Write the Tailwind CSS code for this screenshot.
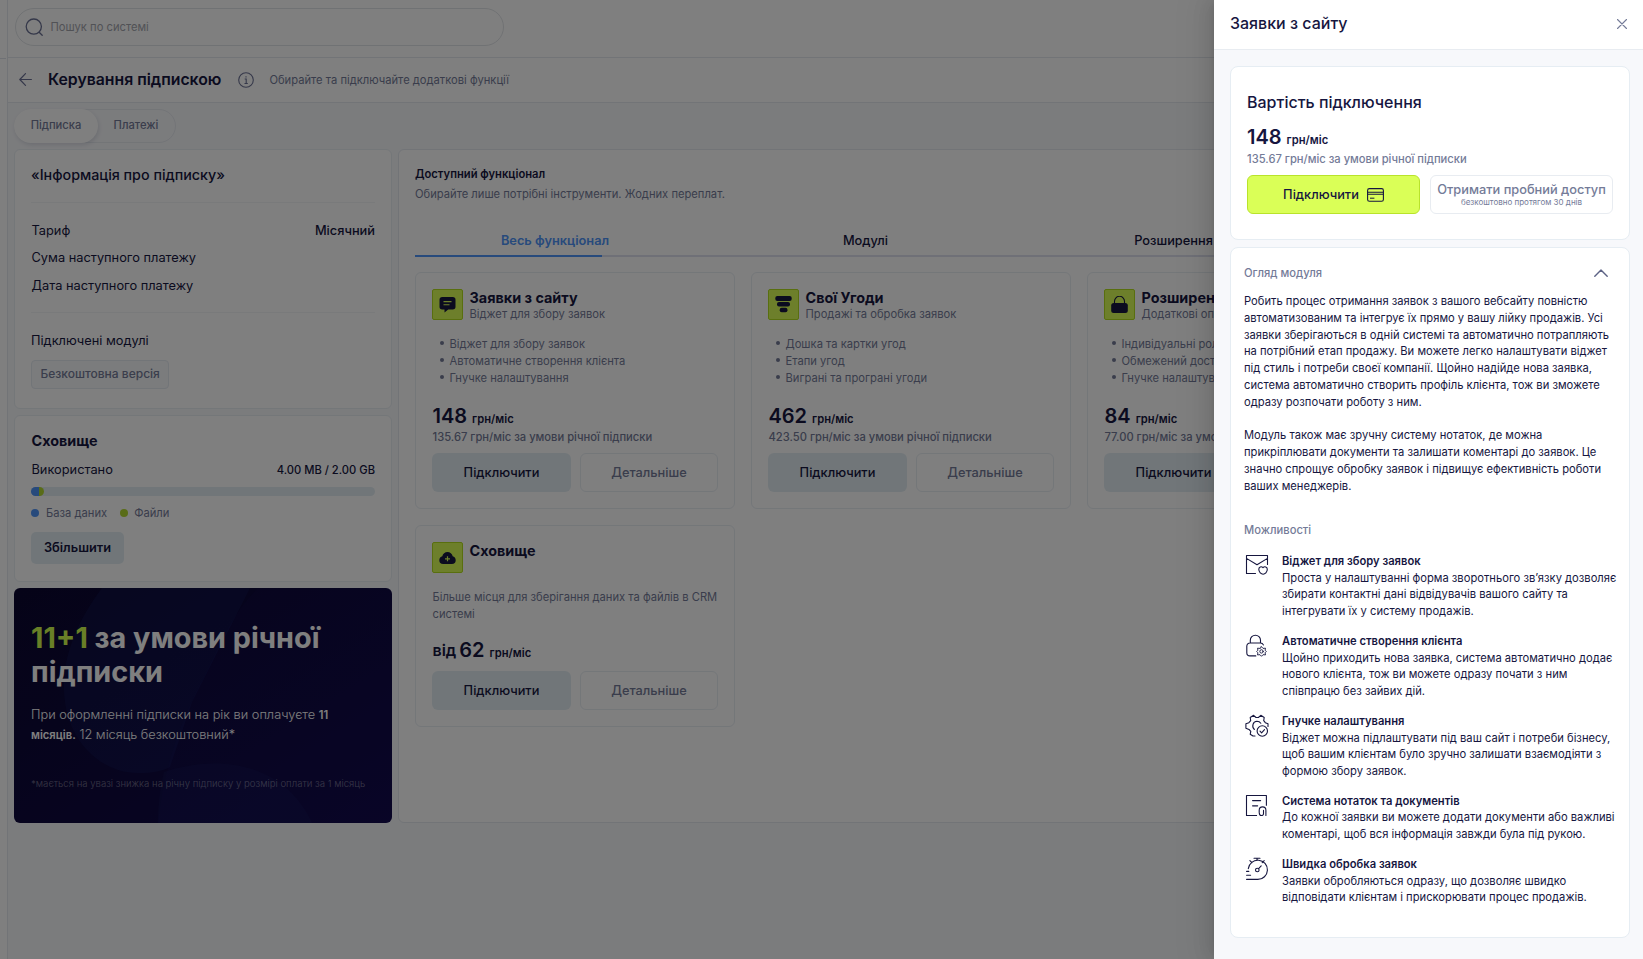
<!DOCTYPE html>
<html lang="uk">
<head>
  <meta charset="utf-8"/>
  <meta content="width=device-width, initial-scale=1" name="viewport"/>
  <title>Керування підпискою</title>
  <script src="https://cdn.jsdelivr.net/npm/@tailwindcss/browser@4"></script>
</head>
<body class="relative h-[959px] overflow-hidden bg-white font-[Inter,sans-serif] text-[11.2px] leading-[16.8px] text-[#16163f]">

  <!-- Сторінка -->
  <div class="flex h-full">
    <aside class="w-[7px] shrink-0">
      <div class="mt-[58px] w-[6px] border-t border-[#dfe3ea]"></div>
    </aside>

    <div class="flex min-w-0 flex-1 flex-col border-l border-[#e4e9ef] bg-[#f7f8fb]">
      <header class="h-[58px] shrink-0 border-b border-[#e4e9ef] bg-white pl-[7px] pt-2">
        <div class="flex h-[38px] w-[489px] items-center rounded-full border border-[#e1e4e8] pl-[9px]">
          <svg class="size-[18px]" viewBox="0 0 18 18" fill="none" stroke="#6b7194" stroke-width="1.3"><circle cx="8.8" cy="8.6" r="7.6"/><path d="M14.2 14.2l3 3" stroke-linecap="round"/></svg>
          <span class="ml-[7.5px] pt-px text-[#a3a5ad]">Пошук по системі</span>
        </div>
      </header>

      <div class="flex h-[45px] shrink-0 items-center border-b border-[#e4e9ef] bg-white pl-[11px]">
        <svg class="-mt-px size-[13px]" viewBox="0 0 13 13" fill="none" stroke="#6b7194" stroke-width="1.2" stroke-linecap="round" stroke-linejoin="round"><path d="M12.4 6.5H.8M6.5.6L.8 6.5l5.7 5.9"/></svg>
        <h1 class="ml-4 text-[15.8px] font-semibold">Керування підпискою</h1>
        <svg class="ml-[17px] -mt-px size-4" viewBox="0 0 16 16" fill="none" stroke="#6b7194" stroke-width="1.1"><circle cx="8" cy="8" r="7.3"/><path d="M6.7 7h1.5v4.4M6.5 11.5h3.3M8 4.2v1.2"/></svg>
        <span class="ml-[15px] mt-px text-[#747b98]">Обирайте та підключайте додаткові функції</span>
      </div>

      <div class="pl-[6px] pt-[6px]">
        <div class="flex h-[34px] w-[162px] rounded-full border border-[#e6eaef] text-[#747b98]">
          <div class="-my-px -ml-px flex w-[84px] items-center justify-center rounded-full bg-white pb-px font-medium shadow-[1px_2px_4px_rgba(30,40,80,0.13)]">Підписка</div>
          <div class="flex flex-1 items-center justify-center pb-px pr-px font-medium">Платежі</div>
        </div>

        <div class="mt-[6px] flex gap-[6px]">
          <!-- Ліва колонка -->
          <div class="flex w-[378px] shrink-0 flex-col gap-[6px]">
            <section class="h-[260px] rounded-md border border-[#e8eef3] bg-white px-4 text-[12.8px]">
              <h2 class="h-[53px] border-b border-[#f2f4f6] pt-[17px] text-[14.3px] font-medium">«Інформація про підписку»</h2>
              <div class="h-[110px] border-b border-[#f2f4f6] pt-5">
                <div class="flex h-[27px] justify-between"><span class="pl-[.5px]">Тариф</span><span class="font-medium">Місячний</span></div>
                <div class="h-7 pl-[.5px]">Сума наступного платежу</div>
                <div class="pl-[.5px]">Дата наступного платежу</div>
              </div>
              <div class="pt-5">Підключені модулі</div>
              <span class="mt-[10px] inline-flex h-[29px] items-center rounded border border-[#e4eaf1] bg-[#f7f8fb] px-[8.5px] pt-px text-[12px] font-medium text-[#747b98]">Безкоштовна версія</span>
            </section>

            <section class="h-[167px] rounded-md border border-[#e8eef3] bg-white px-4 pt-[17px]">
              <h2 class="pl-[.5px] text-[14.4px] font-bold">Сховище</h2>
              <div class="mt-3 flex justify-between"><span class="pl-[.5px] text-[12.8px]">Використано</span><span class="font-medium">4.00 MB / 2.00 GB</span></div>
              <div class="mt-2 flex h-[9px] overflow-hidden rounded-full bg-[#e3edf3]">
                <div class="w-2 bg-[#4f94f8]"></div>
                <div class="w-[5px] rounded-r-full bg-[#b3d930]"></div>
              </div>
              <div class="mt-[9px] flex items-center text-[#747b98]">
                <i class="mr-[7px] size-2 rounded-full bg-[#4f94f8]"></i>База даних
                <i class="ml-[13px] mr-[6px] size-2 rounded-full bg-[#b3d930]"></i>Файли
              </div>
              <button class="mt-[11px] h-8 w-[93px] rounded-[5px] bg-[#e3edf3] pt-px text-[12.8px] font-semibold">Збільшити</button>
            </section>

            <section class="relative h-[235px] overflow-hidden rounded-md bg-linear-to-br from-[#0b0730] to-[#110a4a] px-[17px] pt-[33px] text-white">
              <svg class="absolute left-0 top-0" width="378" height="235" viewBox="0 0 378 235">
                <path d="M88 0C60 38 44 78 52 120c8 40 40 66 74 65 12 0 22-2 30-6l22-65L236 0z" fill="#1d3a86" fill-opacity=".16"/>
                <path d="M144 235c6-60 26-110 48-150 14-30 28-62 52-85h134v235z" fill="#1d24a0" fill-opacity=".06"/>
                <path d="M150 184c60-20 122-6 148 51H144c0-18 2-34 6-51z" fill="#1d3a86" fill-opacity=".12"/>
              </svg>
              <h2 class="relative text-[28.8px] font-bold leading-[34.4px]"><span class="text-[#d2ff4e]">11+1</span> за умови річної підписки</h2>
              <p class="relative mt-[15px] text-[12.8px] font-light leading-5">При оформленні підписки на рік ви оплачуєте <b class="text-[11.2px] font-semibold">11 місяців.</b> 12 місяць безкоштовний*</p>
              <p class="relative mt-[31px] whitespace-nowrap text-[9.6px] font-light text-white/40">*мається на увазі знижка на річну підписку у розмірі оплати за 1 місяць</p>
            </section>
          </div>

          <!-- Доступний функціонал -->
          <section class="h-[674px] flex-1 rounded-md border border-[#e4e9ef] bg-white px-4 pt-4">
            <h2 class="font-semibold">Доступний функціонал</h2>
            <p class="mt-[3.5px] text-[#747b98]">Обирайте лише потрібні інструменти. Жодних переплат.</p>
            <div class="-mx-4 mt-[29.5px] grid w-[1238px] grid-cols-[312px_309px_307px_310px] pb-[6px] text-center text-[12.8px] font-medium">
              <span class="font-semibold text-[#4f94f8]">Весь функціонал</span>
              <span>Модулі</span>
              <span>Розширення</span>
              <span>Послуги</span>
            </div>
            <div class="h-[2px] bg-[#dfe0ee]"><div class="h-full w-[187px] bg-[#4f94f8]"></div></div>
            <div id="modules" class="mt-[15px] grid w-[1000px] grid-cols-[repeat(3,320px)] items-start gap-4"></div>
          </section>
        </div>
      </div>
    </div>
  </div>

  <!-- Затемнення -->
  <div class="absolute inset-0 bg-black/50"></div>

  <!-- Бічна панель -->
  <aside class="absolute inset-y-0 right-0 w-[429px] bg-[#f7f8fb] shadow-[-6px_0_16px_0_rgba(0,0,0,0.08),-3px_0_6px_-4px_rgba(0,0,0,0.12),-9px_0_28px_8px_rgba(0,0,0,0.05)]">
    <header class="flex h-[50px] items-center justify-between border-b border-[#e8ecf1] bg-white pl-4 pr-4">
      <h2 class="-mt-0.5 text-[16px] font-medium">Заявки з сайту</h2>
      <svg class="-mt-0.5 size-[10px]" viewBox="0 0 10 10" stroke="#747b98" stroke-width="1.1" stroke-linecap="round"><path d="M.5.5l9 9M9.5.5l-9 9"/></svg>
    </header>

    <div class="flex flex-col gap-[7px] pl-4 pr-[13px] pt-4">
      <section class="h-[174px] rounded-lg border border-[#e6edf3] bg-white px-4 pt-[27px]">
        <h3 class="text-[16px] font-medium">Вартість підключення</h3>
        <div class="mt-[18px] flex items-baseline"><span class="text-[20px] font-semibold">148</span><span class="ml-[5px] font-semibold">грн/міс</span></div>
        <p class="mt-[2px] font-medium text-[#747b98]">135.67 грн/міс за умови річної підписки</p>
        <div class="mt-2 flex gap-[10px]">
          <button class="flex h-[39px] w-[173px] items-center justify-center rounded-md border border-[#b9e32b] bg-[#daff57] text-[12.8px] font-medium"><span class="pt-0.5">Підключити</span>
            <svg class="ml-2 h-[14px] w-[17px]" viewBox="0 0 17 14" fill="none" stroke="#16163f"><rect x=".6" y=".6" width="15.8" height="12.6" rx="1.8" stroke-width="1.1"/><path d="M.6 4.3h15.8M.6 6.3h15.8" stroke-width="1.1"/><path d="M3 10.2h4.4" stroke-width="1"/></svg>
          </button>
          <button class="flex h-[39px] w-[183px] flex-col items-center justify-center rounded-md border border-[#e8ecf1] font-medium text-[#747b98]">
            <span class="whitespace-nowrap text-[12.8px] leading-[15px]">Отримати пробний доступ</span>
            <span class="text-[8px] font-normal leading-[11px]">безкоштовно протягом 30 днів</span>
          </button>
        </div>
      </section>

      <section class="h-[691px] rounded-lg border border-[#e6edf3] bg-white px-[13px] pt-[17px]">
        <div class="flex items-center justify-between pr-2 font-medium text-[#747b98]">
          Огляд модуля
          <svg class="h-2 w-[14px]" viewBox="0 0 14 8" fill="none" stroke="#5c6285" stroke-width="1.4" stroke-linecap="round" stroke-linejoin="round"><path d="M.8 7.2L7 .9l6.2 6.3"/></svg>
        </div>
        <p class="mt-[11.2px] w-[369px]">Робить процес отримання заявок з вашого вебсайту повністю автоматизованим та інтегрує їх прямо у вашу лійку продажів. Усі заявки зберігаються в одній системі та автоматично потрапляють на потрібний етап продажу. Ви можете легко налаштувати віджет під стиль і потреби своєї компанії. Щойно надійде нова заявка, система автоматично створить профіль клієнта, тож ви зможете одразу розпочати роботу з ним.<br><br>Модуль також має зручну систему нотаток, де можна прикріплювати документи та залишати коментарі до заявок. Це значно спрощує обробку заявок і підвищує ефективність роботи ваших менеджерів.</p>
        <h4 class="mb-[14px] mt-[27.4px] font-medium text-[#747b98]">Можливості</h4>
        <div id="features" class="-mr-2 flex flex-col gap-[12.8px]"></div>
      </section>
    </div>
  </aside>

<script>
  const modules = [
    {
      title: 'Заявки з сайту', sub: 'Віджет для збору заявок',
      list: ['Віджет для збору заявок', 'Автоматичне створення клієнта', 'Гнучке налаштування'],
      price: '148', year: '135.67',
      icon: '<path d="M3.2 1h10.6A2.7 2.7 0 0 1 16.5 3.7v7A2.7 2.7 0 0 1 13.8 13.4H9.2L5.5 16.4V13.4H3.2A2.7 2.7 0 0 1 .5 10.7v-7A2.7 2.7 0 0 1 3.2 1z" fill="#16163f"/><path d="M4.5 5.6h8M4.5 8.8h6" stroke="#daff57" stroke-width="1.1"/>'
    },
    {
      title: 'Свої Угоди', sub: 'Продажі та обробка заявок',
      list: ['Дошка та картки угод', 'Етапи угод', 'Виграні та програні угоди'],
      price: '462', year: '423.50',
      icon: '<g fill="#16163f"><rect x=".3" y="0" width="16.4" height="5" rx="2"/><rect x="2" y="6" width="13" height="4.6" rx="2"/><rect x="4.7" y="11.7" width="7.8" height="4.5" rx="2"/></g>'
    },
    {
      title: 'Розширені права', sub: 'Додаткові опції доступу',
      list: ['Індивідуальні ролі', 'Обмежений доступ', 'Гнучке налаштування'],
      price: '84', year: '77.00',
      icon: '<path d="M3.5 8V5.3a5 5 0 0 1 10 0V8" fill="none" stroke="#16163f" stroke-width="1.1"/><rect x=".2" y="7" width="16.6" height="10" rx="2.5" fill="#16163f"/>'
    },
    {
      title: 'Сховище', text: 'Більше місця для зберігання даних та файлів в CRM системі', price: '62',
      icon: '<path d="M4.3 15A3.9 3.9 0 0 1 .3 11.2c0-2 1.4-3.5 3-3.9C3.8 4.8 6 3 8.5 3s4.7 1.8 5.2 4.3c1.600.4 3 1.9 3 3.9A3.9 3.9 0 0 1 12.7 15z" fill="#16163f"/><path d="M8.5 7.3v5M6 9.8h5" stroke="#daff57" stroke-width="1.2"/>'
    }
  ];

  const ink = 'fill="none" stroke="#16163f" stroke-width="1.1" stroke-linejoin="round" stroke-linecap="round"';
  const features = [
    {
      title: 'Віджет для збору заявок',
      text: 'Проста у налаштуванні форма зворотнього зв’язку дозволяє збирати контактні дані відвідувачів вашого сайту та інтегрувати їх у систему продажів.',
      icon: '<path d="M10.5 19.5H1.5V1.5h21v9M1.5 4.4l10.5 6.3L22.5 4.4"/><path d="M18 13.6c-1.7-1.7-4.2-.6-4.2 1.7 0 3 2.4 4.9 4.3 4.9s4.2-1.9 4.2-4.9c0-2.3-2.6-3.4-4.3-1.7z"/>'
    },
    {
      title: 'Автоматичне створення клієнта',
      text: 'Щойно приходить нова заявка, система автоматично додає нового клієнта, тож ви можете одразу почати з ним співпрацю без зайвих дій.',
      icon: '<path d="M5.3 8.8V6.3a5 5 0 0 1 10.2 0v2.5M10.8 21.9H5A3.2 3.2 0 0 1 1.8 18.7v-6.5A3.2 3.2 0 0 1 5 9h10.5a3.2 3.2 0 0 1 2.9 1.9"/><g stroke-width=".9"><circle cx="16.5" cy="17.4" r="1.7"/><path d="M16.5 12.7l1.5 1.7 2.5-.2-.4 2 1.2 1.3-1.2 1.3.4 2.1-2.5-.2-1.5 1.6-1.5-1.6-2.5.2.4-2.1-1.2-1.3 1.2-1.3-.4-2 2.5.2z"/></g>'
    },
    {
      title: 'Гнучке налаштування',
      text: 'Віджет можна підлаштувати під ваш сайт і потреби бізнесу, щоб вашим клієнтам було зручно залишати взаємодіяти з формою збору заявок.',
      icon: '<path d="M10 22H8L5.2 20.3 5.8 17.4 4 15.4.9 14.2V9.8L3.9 8.7 5.7 6.6 5.2 3.5 8.6 1.3 11 3.5h2.4L15.8 1.3 19.2 3.5 18.7 6.6 20.3 8.7 23 9.8V12.5"/><path d="M9.4 15.5C6.5 13 7.6 7.5 12 7.3c1.8 0 3 .7 3.8 1.9"/><circle cx="17.3" cy="17" r="5.2"/><path d="M15 17.2l1.6 1.6 2.9-3.2"/>'
    },
    {
      title: 'Система нотаток та документів',
      text: 'До кожної заявки ви можете додати документи або важливі коментарі, щоб вся інформація завжди була під рукою.',
      icon: '<path d="M11.5 21.5H1.5V1.5H21.4v9.7" stroke-linecap="square"/><path d="M7.6 6.6h8M7.6 11.8h5" stroke-width="1.2"/><path d="M14.2 18.5v-2.3a3.3 3.3 0 0 1 6.7 0v5.3M14.3 19c0 3.4 4.2 3.3 4.2.4v-3"/>'
    },
    {
      title: 'Швидка обробка заявок',
      text: 'Заявки обробляються одразу, що дозволяє швидко відповідати клієнтам і прискорювати процес продажів.',
      icon: '<path d="M1.6 22.4h11.2A9.6 9.6 0 1 0 3.3 11.6M1.6 18.2h4M1.6 14.4h2.2M9 1.3h6M12 1.3v2.2M4.9 3.7l2 2M19.2 3.7l-2 2"/><circle cx="12.3" cy="13" r="1.8"/><path d="M13.6 11.7l2.6-2.8"/>'
    }
  ];

  function moduleCard(m) {
    const body = m.list
      ? `<ul class="mt-4 h-[64px] pl-[17.5px] text-[#747b98]">${m.list.map(t => `
          <li class="flex"><i class="-ml-[10px] mr-[6px] mt-[5px] size-1 rounded-full bg-[#747b98]"></i>${t}</li>`).join('')}
         </ul>`
      : `<p class="mt-[15.4px] h-[45.6px] pl-[.5px] text-[#747b98]">${m.text}</p>`;
    return `
      <article class="rounded-md border border-[#e8eef3] px-4 pb-4 pt-4">
        <div class="flex h-[31px] gap-[6px]">
          <div class="flex size-[31px] items-center justify-center rounded-[2px] border border-[#b3df1e] bg-[#daff57]">
            <svg class="size-[17px]" viewBox="0 0 17 17">${m.icon}</svg>
          </div>
          <div class="pl-[.5px] pt-px">
            <h3 class="text-[14.4px] font-bold">${m.title}</h3>
            <p class="-mt-[1.5px] text-[#747b98]">${m.sub || ''}</p>
          </div>
        </div>
        ${body}
        <div class="mt-1 flex h-[25px] items-baseline pl-[.5px]">
          ${m.list ? '' : '<span class="relative -top-px mr-[3px] text-[16px] font-semibold">від</span>'}
          <span class="text-[20px] font-semibold leading-[24px]">${m.price}</span>
          <span class="ml-[5px] font-semibold">грн/міс</span>
        </div>
        ${m.year ? `<p class="pl-[.5px] font-medium text-[#747b98]">${m.year} грн/міс за умови річної підписки</p>` : ''}
        <div class="mt-[7.2px] flex gap-[9px] text-[12.8px] font-medium">
          <button class="h-[39px] w-[139px] rounded-md bg-[#e3edf3] pt-0.5">Підключити</button>
          <button class="h-[39px] w-[138px] rounded-md border border-[#e8eef3] pt-0.5 text-[#747b98]">Детальніше</button>
        </div>
      </article>`;
  }

  function featureRow(f) {
    return `
      <div class="flex gap-[13px]">
        <svg class="ml-px mt-px size-6 shrink-0" viewBox="0 0 24 24" ${ink}>${f.icon}</svg>
        <div>
          <h5 class="font-semibold">${f.title}</h5>
          <p>${f.text}</p>
        </div>
      </div>`;
  }

  document.getElementById('modules').innerHTML = modules.map(moduleCard).join('');
  document.getElementById('features').innerHTML = features.map(featureRow).join('');
</script>

</body>
</html>
